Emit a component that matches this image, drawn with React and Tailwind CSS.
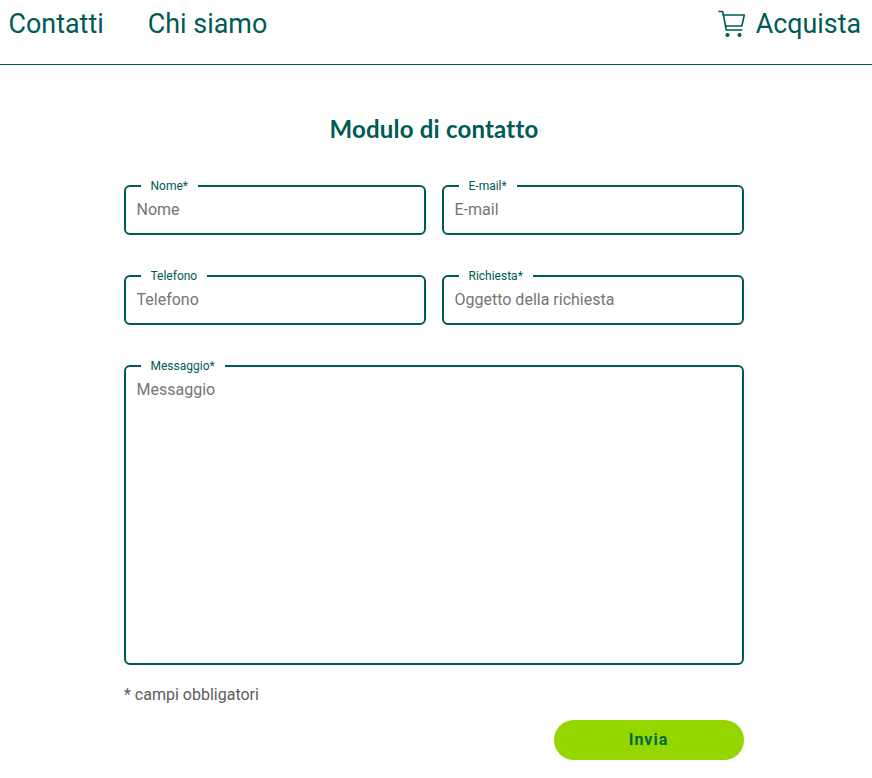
import React from "react";

function Field({ label, placeholder, textarea }) {
  return (
    <div className="relative">
      <span className="absolute left-[16.5px] top-[-6px] bg-white px-[10px] text-[12px] leading-[14px] text-[#005a55]">
        {label}
      </span>
      {textarea ? (
        <textarea
          placeholder={placeholder}
          className="block h-[300px] w-full resize-none rounded-[6px] border-2 border-[#005a55] bg-white px-[10.5px] py-[11px] text-[16px] leading-[24px] outline-none placeholder:text-[#757575]"
        />
      ) : (
        <input
          placeholder={placeholder}
          className="block h-[50px] w-full rounded-[6px] border-2 border-[#005a55] bg-white px-[10.5px] pb-[2px] text-[16px] outline-none placeholder:text-[#757575]"
        />
      )}
    </div>
  );
}

function Cart() {
  return (
    <svg width="28" height="28" viewBox="0 0 28 28" fill="none" stroke="#005a55" strokeWidth="1.6" strokeLinecap="round" strokeLinejoin="round">
      <path d="M1 1.5h3.7l3.6 18.5h15.5" />
      <path d="M5.3 5h21l-2.5 11H7.4" />
      <circle cx="9.5" cy="25" r="1.3" fill="#005a55" />
      <circle cx="21.5" cy="25" r="1.3" fill="#005a55" />
    </svg>
  );
}

export default function App() {
  return (
    <div className="min-h-[778px] bg-white font-['Roboto',sans-serif] text-[#005a55]">
      <header className="flex h-[65px] items-start justify-between border-b border-[#005a55] pl-[8.5px] pr-[11px] pt-[4px]">
        <nav className="flex gap-[44px] text-[26.9px] leading-[40px]">
          <a>Contatti</a>
          <a>Chi siamo</a>
        </nav>
        <a className="flex items-center gap-[10px] text-[26.8px] leading-[40px]">
          <Cart />
          Acquista
        </a>
      </header>
      <main className="ml-[124px] w-[620px]">
        <h1 className="mt-[49px] mb-[41px] text-center font-['Lato',sans-serif] text-[24px] leading-[30px] font-bold tracking-[0.2px]">
          Modulo di contatto
        </h1>
        <div className="grid grid-cols-2 gap-x-[16px] gap-y-[40px]">
          <Field label="Nome*" placeholder="Nome" />
          <Field label="E-mail*" placeholder="E-mail" />
          <Field label="Telefono" placeholder="Telefono" />
          <Field label="Richiesta*" placeholder="Oggetto della richiesta" />
          <div className="col-span-2">
            <Field label="Messaggio*" placeholder="Messaggio" textarea />
          </div>
        </div>
        <p className="mt-[18px] text-[16px] leading-[24px] text-[#5c5c5c]">* campi obbligatori</p>
        <div className="mt-[13px] flex justify-end">
          <button className="h-[40px] w-[190px] rounded-full bg-[#95d600] pr-[1px] text-[16px] font-bold tracking-[1px] text-[#006b3c]">
            Invia
          </button>
        </div>
      </main>
    </div>
  );
}
